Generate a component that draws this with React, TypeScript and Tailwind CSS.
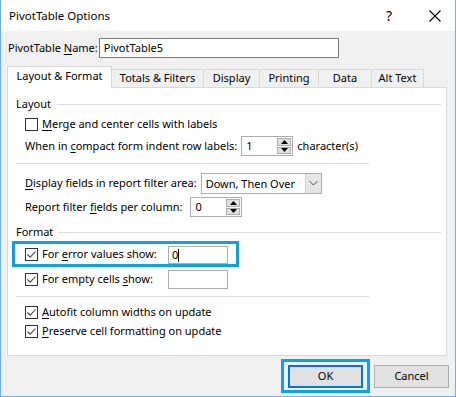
import React from "react"

const font = { fontFamily: '"Noto Sans", "Open Sans", sans-serif' }

const U = ({ children }: { children: React.ReactNode }) => <span className="underline underline-offset-2 decoration-1">{children}</span>

const Check = ({ on }: { on: boolean }) => (
  <span className="w-[13px] h-[13px] border border-[#333] bg-white flex items-center justify-center shrink-0">
    {on && (
      <svg width="11" height="11" viewBox="0 0 11 11">
        <polyline points="1.5,5.5 4.2,8.2 9.5,2.5" fill="none" stroke="#444" strokeWidth="1.1" />
      </svg>
    )}
  </span>
)

const Spinner = ({ value, w }: { value: string; w: string }) => (
  <div className={`${w} h-[20px] border border-[#adadad] bg-white flex items-stretch`}>
    <span className="flex-1 pl-[4px] leading-[18px]">{value}</span>
    <div className="w-[16px] flex flex-col p-px gap-px">
      <span className="flex-1 bg-[#e1e1e1] border border-[#adadad] flex items-center justify-center">
        <svg width="7" height="4" viewBox="0 0 7 4"><polygon points="3.5,0 7,4 0,4" fill="#000" /></svg>
      </span>
      <span className="flex-1 bg-[#e1e1e1] border border-[#adadad] flex items-center justify-center">
        <svg width="7" height="4" viewBox="0 0 7 4"><polygon points="0,0 7,0 3.5,4" fill="#000" /></svg>
      </span>
    </div>
  </div>
)

const GroupHead = ({ title }: { title: string }) => (
  <div className="h-[18px] flex items-center gap-[6px]">
    <span>{title}</span>
    <span className="flex-1 h-px bg-[#dcdcdc] mr-[5px]" />
  </div>
)

const tabs = [
  { label: "Totals & Filters", w: "w-[93px]" },
  { label: "Display", w: "w-[57px]" },
  { label: "Printing", w: "w-[60px]" },
  { label: "Data", w: "w-[54px]" },
  { label: "Alt Text", w: "w-[53px]" },
]

export default function App() {
  return (
    <div className="w-[456px] h-[397px] border-x border-b border-[#6fb0ee] bg-[#f0f0f0] text-[11px] text-black flex flex-col" style={font}>
      <div className="h-[31px] bg-white flex items-center pl-[8px] shrink-0">
        <span className="text-[11.5px]">PivotTable Options</span>
        <span className="ml-auto w-[20px] text-center text-[14px]">?</span>
        <span className="ml-[28px] mr-[12px] w-[16px] flex justify-center">
          <svg width="14" height="14" viewBox="0 0 14 14">
            <path d="M1.5 1.5 L12.5 12.5 M12.5 1.5 L1.5 12.5" stroke="#000" strokeWidth="1.1" />
          </svg>
        </span>
      </div>

      <div className="flex items-center mt-[7px] pl-[7px] h-[20px]">
        <span>PivotTable <U>N</U>ame:</span>
        <div className="ml-[1px] w-[240px] h-[20px] border border-[#7a7a7a] bg-white pl-[4px] leading-[18px]">PivotTable5</div>
      </div>

      <div className="flex items-end mt-[8px] pl-[6px] h-[22px] relative z-10">
        <div className="w-[105px] h-[22px] bg-white border-x border-t border-[#d9d9d9] flex items-center justify-center pb-[2px]">Layout &amp; Format</div>
        {tabs.map((t) => (
          <div key={t.label} className={`${t.w} h-[19px] -ml-px border border-[#d9d9d9] bg-[#f0f0f0] flex items-center justify-center`}>
            {t.label}
          </div>
        ))}
      </div>

      <div className="-mt-px ml-[6px] w-[440px] h-[269px] bg-white border border-[#d9d9d9] flex flex-col pt-[7px] pl-[8px]">
        <GroupHead title="Layout" />
        <div className="h-[23px] flex items-center gap-[4px] pl-[9px]">
          <Check on={false} />
          <span><U>M</U>erge and center cells with labels</span>
        </div>
        <div className="h-[20px] flex items-center pl-[9px]">
          <span>When in <U>c</U>ompact form indent row labels:</span>
          <div className="ml-[4px]"><Spinner value="1" w="w-[52px]" /></div>
          <span className="ml-[4px]">character(s)</span>
        </div>
        <div className="h-[17px] flex items-center pb-[2px]">
          <span className="w-[353px] h-px bg-[#dcdcdc]" />
        </div>
        <div className="h-[20px] flex items-center pl-[9px]">
          <span><U>D</U>isplay fields in report filter area:</span>
          <div className="ml-[4px] w-[121px] h-[21px] border border-[#adadad] bg-white flex items-stretch">
            <span className="flex-1 pl-[4px] leading-[19px]">Down, Then Over</span>
            <span className="w-[16px] bg-[#e5e5e5] border-l border-[#cfcfcf] flex items-center justify-center">
              <svg width="9" height="6" viewBox="0 0 9 6"><polyline points="0.5,1 4.5,5 8.5,1" fill="none" stroke="#555" strokeWidth="1" /></svg>
            </span>
          </div>
        </div>
        <div className="h-[20px] flex items-center pl-[9px] mt-[4px]">
          <span>Report filter <U>f</U>ields per column:</span>
          <div className="ml-[8px]"><Spinner value="0" w="w-[52px]" /></div>
        </div>
        <div className="mt-[6px]">
          <GroupHead title="Format" />
        </div>
        <div className="-ml-[4px] w-[227px] h-[26px] border-[3px] border-[#12a0e0] flex items-center pl-[10px] pr-[8px]">
          <Check on />
          <span className="ml-[4px]">For <U>e</U>rror values show:</span>
          <div className="ml-auto self-end w-[60px] h-[18px] border border-[#adadad] bg-white pl-[3px] leading-[16px] flex items-center">
            0<span className="w-px h-[13px] bg-black" />
          </div>
        </div>
        <div className="-ml-[4px] w-[227px] h-[24px] border-[3px] border-transparent flex items-center pl-[10px] pr-[8px]">
          <Check on />
          <span className="ml-[4px]">For empty cells <U>s</U>how:</span>
          <div className="ml-auto w-[60px] h-[19px] border border-[#adadad] bg-white" />
        </div>
        <div className="h-[10px] flex items-center">
          <span className="w-[353px] h-px bg-[#dcdcdc]" />
        </div>
        <div className="h-[22px] flex items-center gap-[4px] pl-[9px]">
          <Check on />
          <span><U>A</U>utofit column widths on update</span>
        </div>
        <div className="h-[17px] flex items-center gap-[4px] pl-[9px]">
          <Check on />
          <span><U>P</U>reserve cell formatting on update</span>
        </div>
      </div>

      <div className="flex items-center justify-end mt-[3px] pr-[6px] gap-[4px]">
        <div className="w-[89px] h-[34px] border-[3px] border-[#12a0e0] flex items-center justify-center">
          <div className="w-[75px] h-[23px] bg-[#e1e1e1] border-2 border-[#0078d7] flex items-center justify-center">OK</div>
        </div>
        <div className="w-[75px] h-[23px] bg-[#e1e1e1] border border-[#adadad] flex items-center justify-center">Cancel</div>
      </div>
    </div>
  )
}
